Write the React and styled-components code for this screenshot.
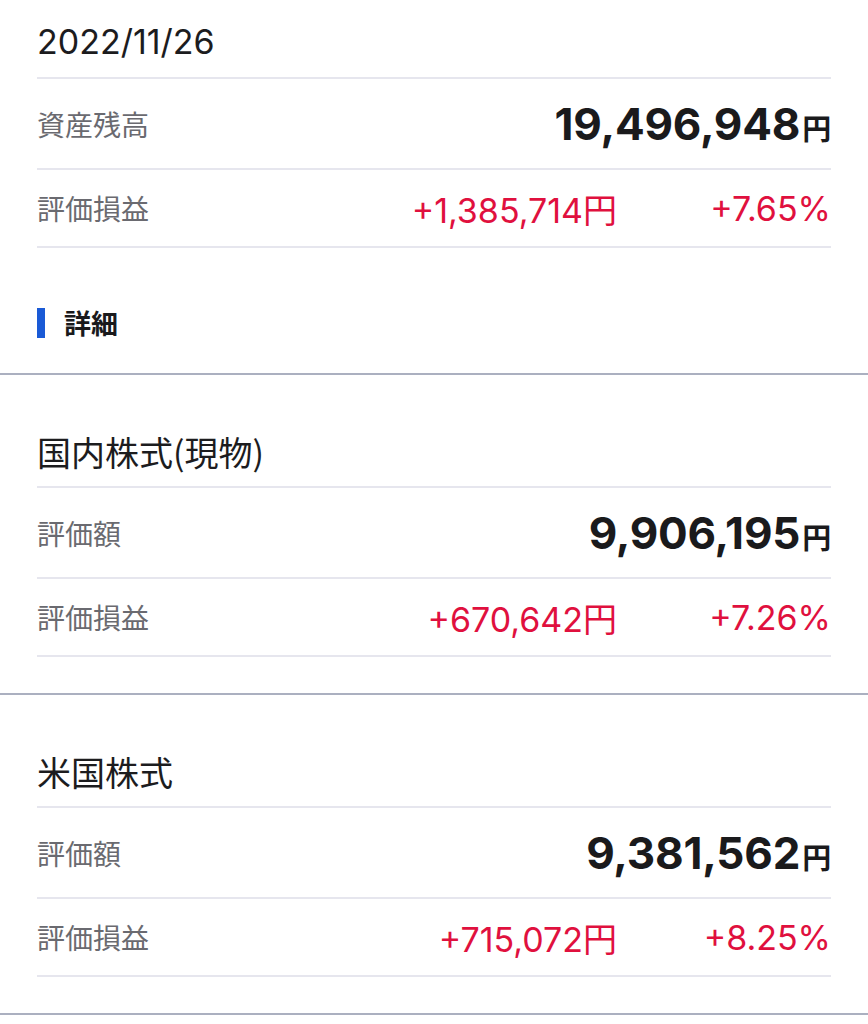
import React from "react";
import styled, { createGlobalStyle } from "styled-components";

const GlobalStyle = createGlobalStyle`
  html, body {
    margin: 0;
    padding: 0;
    background: #ffffff;
  }
  body {
    font-family: Inter, "Noto Sans CJK JP", sans-serif;
    color: #1c1c1e;
  }
`;

const summary = {
  date: "2022/11/26",
  totalLabel: "資産残高",
  total: "19,496,948",
  gain: "+1,385,714",
  rate: "+7.65%",
};

const sections = [
  { title: "国内株式(現物)", value: "9,906,195", gain: "+670,642", rate: "+7.26%" },
  { title: "米国株式", value: "9,381,562", gain: "+715,072", rate: "+8.25%" },
];

const Page = styled.div`
  width: 868px;
`;

const Block = styled.section`
  padding: 0 37px ${(p) => p.$bottom || 0}px;
  border-bottom: 2px solid #abb0c0;
`;

const DateRow = styled.div`
  height: 79px;
  box-sizing: border-box;
  padding-top: 6px;
  display: flex;
  align-items: center;
  font-size: 34px;
  border-bottom: 2px solid #e6e6ee;
`;

const Row = styled.div`
  height: ${(p) => p.$h}px;
  box-sizing: border-box;
  display: flex;
  align-items: center;
  justify-content: space-between;
  border-bottom: 2px solid #e6e6ee;
`;

const Label = styled.span`
  font-family: "Noto Sans CJK JP", sans-serif;
  font-size: 28px;
  color: #6a6a70;
`;

const BigValue = styled.span`
  font-size: 44px;
  font-weight: 700;
  color: #1a1a1c;
  letter-spacing: -0.2px;
`;

const Yen = styled.span`
  font-family: "Noto Sans CJK JP", sans-serif;
  font-size: 29px;
  font-weight: 700;
  margin-left: 2px;
`;

const Gains = styled.div`
  display: flex;
  align-items: center;
  color: #e0103e;
  font-size: 34px;
`;

const Amount = styled.span`
  text-align: right;
`;

const Rate = styled.span`
  width: 214px;
  text-align: right;
`;

const Heading = styled.h2`
  margin: 0;
  padding: 60px 0 35px;
  display: flex;
  align-items: center;
  gap: 19px;
  font-family: "Noto Sans CJK JP", sans-serif;
  font-size: 27px;
  font-weight: 700;
  line-height: 30px;
  color: #1a1a1c;
  &::before {
    content: "";
    width: 8px;
    height: 30px;
    background: #1a5ad6;
  }
`;

const Title = styled.h3`
  margin: 0;
  padding: 57px 0 14px;
  line-height: 40px;
  font-family: "Noto Sans CJK JP", sans-serif;
  font-size: 34px;
  font-weight: 400;
  color: #1c1c1e;
  border-bottom: 2px solid #e6e6ee;
`;

function GainRow({ gain, rate }) {
  return (
    <Row $h={78}>
      <Label>評価損益</Label>
      <Gains>
        <Amount>
          {gain}円
        </Amount>
        <Rate>{rate}</Rate>
      </Gains>
    </Row>
  );
}

export default function App() {
  return (
    <Page>
      <GlobalStyle />
      <Block>
        <DateRow>{summary.date}</DateRow>
        <Row $h={91}>
          <Label>{summary.totalLabel}</Label>
          <BigValue>
            {summary.total}
            <Yen>円</Yen>
          </BigValue>
        </Row>
        <GainRow gain={summary.gain} rate={summary.rate} />
        <Heading>詳細</Heading>
      </Block>
      {sections.map((s) => (
        <Block key={s.title} $bottom={36}>
          <Title>{s.title}</Title>
          <Row $h={91}>
            <Label>評価額</Label>
            <BigValue>
              {s.value}
              <Yen>円</Yen>
            </BigValue>
          </Row>
          <GainRow gain={s.gain} rate={s.rate} />
        </Block>
      ))}
    </Page>
  );
}
